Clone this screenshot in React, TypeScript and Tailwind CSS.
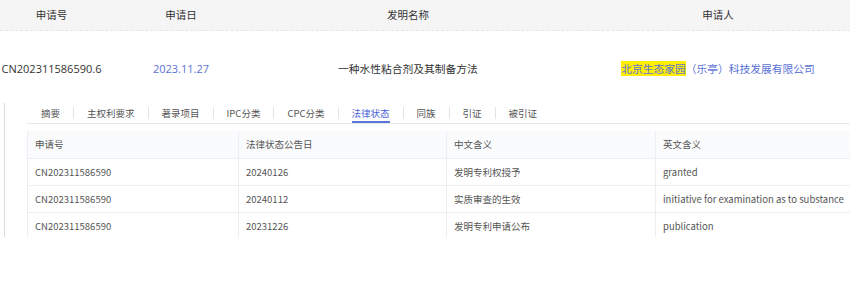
import React from "react";

const tabs = ["摘要", "主权利要求", "著录项目", "IPC分类", "CPC分类", "法律状态", "同族", "引证", "被引证"];

const rows = [
  ["CN202311586590", "20240126", "发明专利权授予", "granted"],
  ["CN202311586590", "20240112", "实质审查的生效", "initiative for examination as to substance"],
  ["CN202311586590", "20231226", "发明专利申请公布", "publication"],
];

export default function App() {
  const font = { fontFamily: '"Noto Sans CJK SC", "Noto Sans", sans-serif' };
  const latin = { fontFamily: '"Open Sans", "Noto Sans CJK SC", sans-serif' };
  return (
    <div className="w-[850px] h-[281px] overflow-hidden bg-white" style={font}>
      <div className="grid grid-cols-[103px_156px_298px_322px] h-[31px] items-center bg-[#f5f5f5] border-b border-dashed border-[#e6e6e6] text-[10.5px] text-[#333]">
        <div className="text-center">申请号</div>
        <div className="text-center">申请日</div>
        <div className="text-center">发明名称</div>
        <div className="text-center">申请人</div>
      </div>
      <div className="grid grid-cols-[103px_156px_298px_322px] h-[72px] items-center pt-[4px] text-[10.75px] text-[#333] whitespace-nowrap">
        <div className="text-center text-[11px]" style={latin}>CN202311586590.6</div>
        <div className="text-center text-[11px] text-[#5a72d6]" style={latin}>2023.11.27</div>
        <div className="text-center">一种水性粘合剂及其制备方法</div>
        <div className="text-center text-[#5a72d6]">
          <span className="bg-[#ffee00]">北京生态家园</span>（乐亭）科技发展有限公司
        </div>
      </div>
      <div className="ml-[4px] h-[134px] border-l border-[#dcdcdc] pl-[22px] overflow-hidden">
        <div className="flex h-[21px] items-center border-b border-[#e8e8e8] pl-px text-[9.5px] text-[#555] whitespace-nowrap">
          {tabs.map((t, i) => (
            <React.Fragment key={t}>
              {i > 0 && <div className="w-px h-[12px] bg-[#e3e3e3]" />}
              <div className="px-[13px] h-full flex items-center">
                <span
                  className={
                    t === "法律状态"
                      ? "relative h-full flex items-center text-[#4a63d8] border-b-2 border-[#5b74dc] pt-[2px]"
                      : ""
                  }
                >
                  {t}
                </span>
              </div>
            </React.Fragment>
          ))}
        </div>
        <div className="mt-[7px] border-l border-[#eceef3] text-[9.5px] text-[#555] whitespace-nowrap">
          <div className="grid grid-cols-[211px_208px_209px_209px] h-[28px] items-center bg-[#fafbfc] border-b border-[#eceef3]">
            <div className="pl-[7px] h-full flex items-center border-r border-[#eceef3]">申请号</div>
            <div className="pl-[7px] h-full flex items-center border-r border-[#eceef3]">法律状态公告日</div>
            <div className="pl-[7px] h-full flex items-center border-r border-[#eceef3]">中文含义</div>
            <div className="pl-[7px] h-full flex items-center">英文含义</div>
          </div>
          {rows.map((r, i) => (
            <div key={i} className="grid grid-cols-[211px_208px_209px_209px] h-[27px] items-center border-b border-[#eceef3]">
              <div className="pl-[7px] h-full flex items-center border-r border-[#eceef3]">{r[0]}</div>
              <div className="pl-[7px] h-full flex items-center border-r border-[#eceef3]">{r[1]}</div>
              <div className="pl-[7px] h-full flex items-center border-r border-[#eceef3]">{r[2]}</div>
              <div className="pl-[7px] h-full flex items-center">{r[3]}</div>
            </div>
          ))}
        </div>
      </div>
    </div>
  );
}
